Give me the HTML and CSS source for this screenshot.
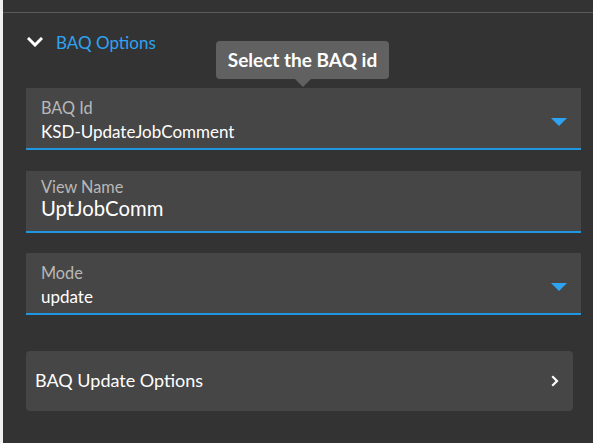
FILE: index.html
```html
<!DOCTYPE html>
<html>
<head>
<meta charset="utf-8">
<link rel="stylesheet" href="styles.css">
</head>
<body>
<div class="page">
  <div class="topbar"></div>
  <div class="section">
    <div class="section-header">
      <svg class="chev-down" width="16" height="10" viewBox="0 0 16 10"><path d="M2 2 L8 8 L14 2" fill="none" stroke="#ffffff" stroke-width="3" stroke-linecap="square"/></svg>
      <span class="section-title">BAQ Options</span>
      <div class="tooltip">Select the BAQ id</div>
    </div>
    <div class="fields">
      <div class="field first">
        <div class="field-text">
          <div class="label">BAQ Id</div>
          <div class="value">KSD-UpdateJobComment</div>
        </div>
        <svg class="caret" width="16" height="8" viewBox="0 0 16 8"><path d="M0 0 H16 L8 8 Z" fill="#2ea3f2"/></svg>
      </div>
      <div class="field input">
        <div class="field-text">
          <div class="label">View Name</div>
          <div class="value big">UptJobComm</div>
        </div>
      </div>
      <div class="field">
        <div class="field-text">
          <div class="label">Mode</div>
          <div class="value">update</div>
        </div>
        <svg class="caret" width="16" height="8" viewBox="0 0 16 8"><path d="M0 0 H16 L8 8 Z" fill="#2ea3f2"/></svg>
      </div>
    </div>
    <div class="card">
      <span class="card-title">BAQ Update Options</span>
      <svg class="chev-right" width="8" height="12" viewBox="0 0 8 12"><path d="M2 2 L6 6 L2 10" fill="none" stroke="#ffffff" stroke-width="2.2" stroke-linecap="square"/></svg>
    </div>
  </div>
</div>
</body>
</html>
```
FILE: styles.css
```css
html, body {
  margin: 0;
  padding: 0;
  background: #333333;
}
body {
  font-family: Lato, "Open Sans", sans-serif;
  width: 593px;
  height: 443px;
  overflow: hidden;
}
.page {
  border-left: 3px solid #f0f0f0;
  height: 443px;
  box-sizing: border-box;
}
.topbar {
  height: 12px;
  border-bottom: 1px solid #5a5a5a;
}
.section {
  padding: 0 12px 0 23px;
}
.section-header {
  position: relative;
  display: flex;
  align-items: center;
  height: 75px;
  box-sizing: border-box;
  padding: 19px 0 34px 1px;
}
.chev-down {
  margin-top: -2px;
}
.section-title {
  color: #2ea3f2;
  font-size: 17px;
  line-height: 22px;
  margin-left: 13px;
}
.tooltip {
  position: absolute;
  left: 190px;
  top: 28px;
  width: 173px;
  height: 38px;
  box-sizing: border-box;
  background: #616161;
  border-radius: 4px;
  color: #ffffff;
  font-weight: 700;
  font-size: 19px;
  line-height: 38px;
  text-align: center;
  white-space: nowrap;
}
.tooltip::after {
  content: "";
  position: absolute;
  left: 79px;
  top: 38px;
  border-left: 8px solid transparent;
  border-right: 8px solid transparent;
  border-top: 8px solid #616161;
}
.fields {
  display: flex;
  flex-direction: column;
  gap: 20px;
}
.field {
  display: flex;
  align-items: flex-start;
  height: 62px;
  box-sizing: border-box;
  background: #464646;
  border-bottom: 2px solid #2196e0;
  padding: 10px 14px 0 15px;
}
.field.first {
  margin-bottom: 1px;
}
.field.input {
  padding-top: 6px;
}
.field-text {
  flex: 1;
  display: flex;
  flex-direction: column;
}
.label {
  color: #b8b8b8;
  font-size: 16.3px;
  line-height: 20px;
}
.value {
  color: #ffffff;
  font-size: 17px;
  line-height: 22px;
  margin-top: 3px;
}
.value.big {
  font-size: 20.3px;
  line-height: 24px;
  margin-top: -1px;
}
.caret {
  margin-top: 20px;
}
.card {
  margin-top: 36px;
  width: 547px;
  height: 60px;
  box-sizing: border-box;
  background: #464646;
  border-radius: 4px;
  display: flex;
  align-items: center;
  justify-content: space-between;
  padding: 0 14px 0 9px;
}
.card-title {
  color: #ffffff;
  font-size: 18px;
  margin-top: -2px;
}
.chev-right {
  margin-top: -1px;
}
```
